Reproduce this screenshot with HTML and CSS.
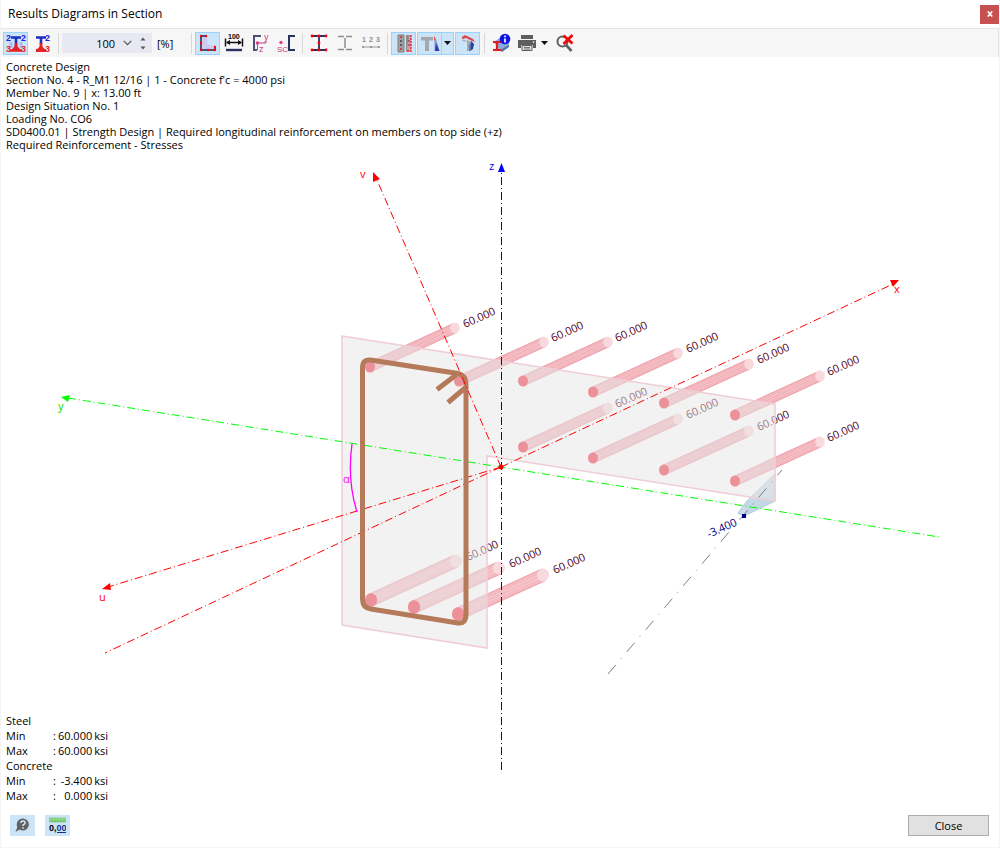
FILE: index.html
```html
<!DOCTYPE html>
<html lang="en">
<head>
<meta charset="utf-8">
<title>Results Diagrams in Section</title>
<link rel="stylesheet" href="styles.css">
</head>
<body>
<div class="window">
  <header class="titlebar">
    <h1 class="title">Results Diagrams in Section</h1>
    <button class="close-x" type="button" aria-label="Close window">
      <svg width="6" height="6" viewBox="0 0 6 6"><path d="M.8.5 5.2 5.5M5.2.5.8 5.5" stroke="#fff" stroke-width="1.7"/></svg>
    </button>
  </header>

  <div class="toolbar" role="toolbar" aria-label="Diagram tools">
    <button class="tool active" type="button" aria-label="Show all values">
      <svg width="20" height="19" viewBox="0 0 20 19">
        <path d="M5 8v6M15 8v6" stroke="#a9bdf4" stroke-width="3"/>
        <path d="M5 3.500h10M10 3.500v9" stroke="#1b2fc0" stroke-width="2.600"/>
        <path d="M4 16.500h12M10 9v5" stroke="#e8202a" stroke-width="2.600"/>
        <path d="M10 10.500 14.500 16h-9z" fill="#e8202a"/>
        <g class="tiny blue"><text x="0" y="7">2</text><text x="15" y="7">2</text></g>
        <g class="tiny red"><text x="0" y="18">3</text><text x="15" y="18">3</text></g>
      </svg>
    </button>
    <button class="tool" type="button" aria-label="Show extreme values">
      <svg width="20" height="19" viewBox="0 0 20 19">
        <path d="M4 3.500h10M9 3v7" stroke="#1b2fc0" stroke-width="2.600"/>
        <path d="M4 16.500h10M9 9v5" stroke="#e8202a" stroke-width="2.800"/>
        <path d="M9 11 13.500 16h-9z" fill="#e8202a"/>
        <text class="tiny blue" x="13" y="7">2</text><text class="tiny red" x="13" y="18">3</text>
      </svg>
    </button>
    <span class="sep"></span>
    <div class="scale">
      <input class="scale-value" type="text" value="100" aria-label="Scale in percent">
      <button class="mini" type="button" aria-label="Open list"><svg width="9" height="6" viewBox="0 0 9 6"><path d="m.7.800 3.800 3.900L8.300.8" fill="none" stroke="#555" stroke-width="1.200"/></svg></button>
      <button class="mini" type="button" aria-label="Step value"><svg width="6" height="13" viewBox="0 0 6 13"><path d="M3 .5 5.500 3.500h-5zM3 12.500.500 9.500h5z" fill="#555"/></svg></button>
    </div>
    <span class="unit">[%]</span>
    <span class="sep"></span>

    <button class="tool active" type="button" aria-label="Section outline">
      <svg width="20" height="20" viewBox="0 0 20 20">
        <path d="M4 2v15h13v-5h-4q-4 0-4-4V2z" fill="#cdcdf2"/>
        <path d="M8 3H3v14h14v-3" fill="none" stroke="#24244e" stroke-width="1.500"/>
        <g fill="#f00"><circle cx="3" cy="3" r="1.200"/><circle cx="8" cy="3" r="1.200"/><circle cx="3" cy="10" r="1.200"/><circle cx="3" cy="17" r="1.200"/><circle cx="10" cy="17" r="1.200"/><circle cx="17" cy="17" r="1.200"/><circle cx="17" cy="14" r="1.200"/></g>
      </svg>
    </button>
    <button class="tool" type="button" aria-label="Dimensions">
      <svg width="20" height="20" viewBox="0 0 20 20">
        <text class="num" x="4" y="6">100</text>
        <path d="M1.500 5.500v8M18.500 5.500v8M3 9.500h14" stroke="#111" stroke-width="1.500"/>
        <path d="m2 9.500 4-2.500v5zM18 9.500 14 7v5z" fill="#111"/>
        <path d="M2 17h16" stroke="#29335e" stroke-width="2.400"/>
      </svg>
    </button>
    <button class="tool" type="button" aria-label="Principal axes">
      <svg width="20" height="20" viewBox="0 0 20 20">
        <path d="M11 3H4v14h3" fill="none" stroke="#4b5179" stroke-width="2"/>
        <path d="M6 10h10v-2M7.500 10v7" stroke="#c63e86" fill="none"/><circle cx="7.500" cy="10" r="1.800" fill="#d13e8c"/>
        <text class="sc" x="14" y="7">y</text><text class="sc" x="9" y="19">z</text>
      </svg>
    </button>
    <button class="tool" type="button" aria-label="Shear center">
      <svg width="20" height="20" viewBox="0 0 20 20">
        <path d="M19 3h-6v14h6" fill="none" stroke="#29335e" stroke-width="2"/>
        <circle cx="5" cy="9.500" r="1.700" fill="#e0408c"/><text class="sc narrow" x="1" y="19">SC</text>
      </svg>
    </button>
    <span class="sep"></span>
    <button class="tool" type="button" aria-label="Stress points">
      <svg width="20" height="20" viewBox="0 0 20 20">
        <path d="M3 3h14M3 17h14M10 3v14" stroke="#29335e" stroke-width="1.800"/>
        <g fill="#f00"><circle cx="3" cy="3" r="1.400"/><circle cx="10" cy="3" r="1.400"/><circle cx="17" cy="3" r="1.400"/><circle cx="10" cy="10" r="1.400"/><circle cx="3" cy="17" r="1.400"/><circle cx="10" cy="17" r="1.400"/><circle cx="17" cy="17" r="1.400"/></g>
      </svg>
    </button>
    <button class="tool" type="button" aria-label="Section parts">
      <svg width="20" height="20" viewBox="0 0 20 20"><path d="M3 3.500h6M11 3.500h6M3 16.500h6M11 16.500h6M10 5v10" stroke="#8e8e8e" stroke-width="1.500"/></svg>
    </button>
    <button class="tool" type="button" aria-label="Numbering">
      <svg width="20" height="20" viewBox="0 0 20 20"><g class="grey"><text x="1" y="9">1</text><text x="8" y="9">2</text><text x="15" y="9">3</text></g><path d="M2 14h16" stroke="#999"/><g fill="#888"><circle cx="2" cy="14" r="1"/><circle cx="10" cy="14" r="1"/><circle cx="18" cy="14" r="1"/></g></svg>
    </button>
    <span class="sep"></span>

    <button class="tool active" type="button" aria-label="Reinforcement">
      <svg width="20" height="20" viewBox="0 0 20 20">
        <path d="M4 2h6v17H4z" fill="#a0a0a0" stroke="#808080"/>
        <path d="M12 2h5v17h-5z" fill="#e0959c"/><path d="M12 2h3q0 4-1 7t-1 9h-1z" fill="#8c8c8c"/>
        <path d="M17 2v16h-5" fill="none" stroke="#dc3540" stroke-width="1.500" stroke-dasharray="2 1"/>
        <circle cx="7" cy="4" r="1" fill="#d22"/><circle cx="7" cy="8" r=".9" fill="#335"/><circle cx="7" cy="12" r=".9" fill="#335"/><circle cx="7" cy="16" r="1" fill="#d22"/><circle cx="15" cy="8" r=".8" fill="#335"/><circle cx="15" cy="12" r=".8" fill="#335"/>
      </svg>
    </button>
    <span class="split">
      <button class="tool active" type="button" aria-label="Stress diagram">
        <svg width="20" height="20" viewBox="0 0 20 20"><path d="M1 4h12v3.500H9V18H5V7.500H1z" fill="#a5a9ae"/><path d="M14 2.500v5h2.500z" fill="#e8525b"/><path d="M14.500 7.500h2L19.500 18h-5z" fill="#8994c8"/><path d="m16 10 3.500 8H15z" fill="#283fae"/></svg>
      </button>
      <button class="drop active" type="button" aria-label="Diagram options"><svg width="7" height="4" viewBox="0 0 7 4"><path d="M0 0h7L3.500 4z" fill="#111"/></svg></button>
    </span>
    <button class="tool active" type="button" aria-label="Concrete stresses">
      <svg width="20" height="20" viewBox="0 0 20 20"><path d="m9 7 5 2-1 9H9z" fill="#a3a8b2"/><path d="m4 4 3-2 8 4 2 3-3-1-6-3-4 1z" fill="#e0454a"/><path d="m5 6 4 2-1 1-4-1z" fill="#b0b5bd"/><path d="m13 8 3 3-1 5-3 2z" fill="#263fa6"/><path d="m11 12 2-2v7l-2 1z" fill="#5f73b8"/></svg>
    </button>
    <span class="sep"></span>
    <button class="tool" type="button" aria-label="Section information">
      <svg width="20" height="20" viewBox="0 0 20 20">
        <path d="m3 9 7-5h8v9l-7 5H9z" fill="#8ba9df"/><path d="m9 17 9-5v2l-7 5z" fill="#55729e"/><path d="M2 9h8M2 17h8M6 9v8" stroke="#e31b24" stroke-width="2.200"/>
        <circle cx="14" cy="6" r="5.300" fill="#0b15e8"/><path d="M14 5.500v4M14 2.500v1.800" stroke="#fff" stroke-width="1.700"/>
      </svg>
    </button>
    <span class="split">
      <button class="tool" type="button" aria-label="Print">
        <svg width="20" height="20" viewBox="0 0 20 20"><path d="M4 2h12v4H4zM1 7h18v8h-3v-3H4v3H1z" fill="#5e5e5e"/><path d="M5 12.500h10v5H5z" fill="#ddd" stroke="#5e5e5e"/><path d="M7 14.500h6M7 16h6" stroke="#777"/><circle cx="16.500" cy="9" r=".8" fill="#fff"/></svg>
      </button>
      <button class="drop" type="button" aria-label="Print options"><svg width="7" height="4" viewBox="0 0 7 4"><path d="M0 0h7L3.500 4z" fill="#111"/></svg></button>
    </span>
    <button class="tool" type="button" aria-label="Reset zoom">
      <svg width="20" height="20" viewBox="0 0 20 20"><circle cx="7.500" cy="8.500" r="5" fill="none" stroke="#606060" stroke-width="2"/><path d="m11 12 5.500 6" stroke="#606060" stroke-width="2.600"/><path d="m8.500 2.500 9 8M17.500 2l-9 9" stroke="#f00808" stroke-width="2.800"/></svg>
    </button>
  </div>

  <main class="stage">
    <svg class="diagram" viewBox="1 57 998 753" role="img" aria-label="Required reinforcement stresses in the section">
      <defs>
        <g id="bar">
          <path d="M0 0 85-39" stroke="#eea3ad" stroke-width="10.500"/>
          <path d="M0 0 85-39" stroke="#f3b7be" stroke-width="8.500"/>
          <path d="M0 0 85-39" stroke="#f6c3c9" stroke-width="3"/>
          <path d="M0 0 85-39" stroke="#f0a9b2" stroke-width="1"/>
          <ellipse cx="85" cy="-39" rx="4.800" ry="5.500" fill="#f8d9dd"/>
        </g>
        <g id="bar-lg">
          <path d="M0 0 85-39" stroke="#eea3ad" stroke-width="13"/>
          <path d="M0 0 85-39" stroke="#f4bac1" stroke-width="11"/>
          <path d="M0 0 85-39" stroke="#f6c3c9" stroke-width="5"/>
          <path d="M0 0 85-39" stroke="#f3b5bd" stroke-width="1"/>
          <ellipse cx="85" cy="-39" rx="6" ry="6.500" fill="#f8d9dd"/>
        </g>
        <ellipse id="cap" rx="5" ry="5.500"/>
        <ellipse id="cap-lg" rx="6.200" ry="6.800"/>
      </defs>

      <g>
        <use href="#bar" x="370" y="367"/><use href="#bar" x="459" y="381"/>
        <use href="#bar" x="523" y="381"/><use href="#bar" x="593" y="392"/>
        <use href="#bar" x="664" y="403"/><use href="#bar" x="735" y="415"/>
        <use href="#bar" x="523" y="447"/><use href="#bar" x="593" y="458"/>
        <use href="#bar" x="664" y="470"/><use href="#bar" x="735" y="481"/>
        <use href="#bar-lg" x="371" y="600"/><use href="#bar-lg" x="414" y="607"/><use href="#bar-lg" x="458" y="614"/>
      </g>
      <g class="value">
        <text transform="translate(465 328) rotate(-24)">60.000</text>
        <text transform="translate(553 342) rotate(-24)">60.000</text>
        <text transform="translate(617 342) rotate(-24)">60.000</text>
        <text transform="translate(688 353) rotate(-24)">60.000</text>
        <text transform="translate(759 364) rotate(-24)">60.000</text>
        <text transform="translate(829 376) rotate(-24)">60.000</text>
        <text transform="translate(617 408) rotate(-24)">60.000</text>
        <text transform="translate(688 419) rotate(-24)">60.000</text>
        <text transform="translate(759 431) rotate(-24)">60.000</text>
        <text transform="translate(829 442) rotate(-24)">60.000</text>
        <text transform="translate(468 561) rotate(-24)">60.000</text>
        <text transform="translate(511 568) rotate(-24)">60.000</text>
        <text transform="translate(555 574) rotate(-24)">60.000</text>
      </g>
      <path d="m738 513 9-12 28-27v27l-31 15z" fill="#cbddea" stroke="#a9c6d9"/>
      <path d="m747 501 28-5v5l-31 15z" fill="#bdd6e5" opacity=".7"/>

      <path d="M342 336 775 404v97L487 456v192L342 625z" fill="#e5e5e5" fill-opacity=".5" stroke="#efcdd5" stroke-width="1.500"/>

      <path class="neutral" d="M608 674 782 470"/>
      <path class="axis y" d="M68 398 939 537"/>
      <path class="axis x" d="M501 467 893 284M501 467 105 653M501 467 108 587"/>
      <path class="axis z" d="M501.500 770V172"/>

      <g fill="#ec909a">
        <use href="#cap" x="370" y="367"/><use href="#cap" x="459" y="381"/><use href="#cap" x="523" y="381"/>
        <use href="#cap" x="593" y="392"/><use href="#cap" x="664" y="403"/><use href="#cap" x="735" y="415"/>
        <use href="#cap" x="523" y="447"/><use href="#cap" x="593" y="458"/><use href="#cap" x="664" y="470"/>
        <use href="#cap" x="735" y="481"/>
        <use href="#cap-lg" x="371" y="600"/><use href="#cap-lg" x="414" y="607"/><use href="#cap-lg" x="458" y="614"/>
      </g>
      <path class="stirrup" d="M362.500 368q0-9 8-8L458 373.500q8 2 8 11V614q0 10-8 9L371 609q-8.500-1-8.500-10zM456 375 437 389.500M465 388 448 402.500"/>
      <path class="axis x" d="M501 467 377 180"/>

      <path d="M352 444Q347 480 357 512" fill="none" stroke="#f0f" stroke-width="1.300"/>
      <circle cx="501" cy="467" r="2.500" fill="#f00"/>
      <path d="M742 514h4v4h-4z" fill="#000080"/>
      <path d="m373 172 7 7-7 3zM102 589l8-6 1 7zM899 280l-9 0 3 7z" fill="#f00"/>
      <path d="m61 397 9-2-2 7z" fill="#0f0"/>
      <path d="m501.500 163 3.500 9h-7z" fill="#00f"/>

      <g class="letter">
        <text x="360" y="178" fill="#f00">v</text><text x="489" y="170" fill="#00f">z</text>
        <text x="894" y="293" fill="#f00">x</text><text x="58" y="410" fill="#0d0">y</text>
        <text x="99" y="601" fill="#f00">u</text><text x="343" y="483" fill="#f0f">α</text>
        <text transform="translate(709 538) rotate(-24)" fill="#000080">-3.400</text>
      </g>
    </svg>

    <div class="info">
      <p>Concrete Design</p>
      <p>Section No. 4 - R_M1 12/16 | 1 - Concrete f'c = 4000 psi</p>
      <p>Member No. 9 | x: 13.00 ft</p>
      <p>Design Situation No. 1</p>
      <p>Loading No. CO6</p>
      <p>SD0400.01 | Strength Design | Required longitudinal reinforcement on members on top side (+z)</p>
      <p>Required Reinforcement - Stresses</p>
    </div>

    <table class="summary">
      <tbody>
        <tr><th colspan="4" scope="rowgroup">Steel</th></tr>
        <tr><th scope="row">Min</th><td>:</td><td class="amount">60.000</td><td>ksi</td></tr>
        <tr><th scope="row">Max</th><td>:</td><td class="amount">60.000</td><td>ksi</td></tr>
      </tbody>
      <tbody>
        <tr><th colspan="4" scope="rowgroup">Concrete</th></tr>
        <tr><th scope="row">Min</th><td>:</td><td class="amount">-3.400</td><td>ksi</td></tr>
        <tr><th scope="row">Max</th><td>:</td><td class="amount">0.000</td><td>ksi</td></tr>
      </tbody>
    </table>
  </main>

  <footer class="footer">
    <button class="foot-btn" type="button" aria-label="Help">
      <svg width="17" height="17" viewBox="0 0 17 17"><path d="M9 1.500a6 6 0 1 1-3.500 11L1.500 15l1.800-5A6 6 0 0 1 9 1.500z" fill="#626262"/><path d="M6.800 6q.2-2 2.200-2t2.200 1.800q0 1.200-2.200 2.400V9M9 10.200v1.600" fill="none" stroke="#d6e8f7" stroke-width="1.500"/></svg>
    </button>
    <button class="foot-btn" type="button" aria-label="Units and decimal places">
      <svg width="17" height="17" viewBox="0 0 17 17"><path d="M.5 1h16v4H.5z" fill="#8bdc83" stroke="#6fc068" stroke-width=".6"/><path d="M3 3v2M6 3v2M9 3v2M12 3v2M15 3v2" stroke="#4b9b47" stroke-width=".7"/><text class="dec" x="0" y="14">0,<tspan fill="#15338a">00</tspan></text><path d="M8 15.500h9" stroke="#15338a"/></svg>
    </button>
    <button class="close-btn" type="button">Close</button>
  </footer>
</div>
</body>
</html>
```

FILE: styles.css
```css
* { box-sizing: border-box; }

body {
  margin: 0;
  background: #fff;
  color: #000;
  font: 11px/13px "Open Sans", "Noto Sans", sans-serif;
}

button { padding: 0; border: 0; background: none; color: inherit; font: inherit; }
p { margin: 0; }
svg { display: block; }

.window {
  display: flex;
  flex-direction: column;
  min-height: 100vh;
  border: 1px solid #f5f5f5;
  border-top: 0;
}

.titlebar {
  display: flex;
  align-items: center;
  justify-content: space-between;
  height: 28px;
  padding-left: 7px;
}

.title { margin: 0; font-size: 12px; line-height: 16px; font-weight: 400; }

.close-x {
  display: grid;
  place-items: center;
  width: 19px;
  height: 19px;
  background: #c75050;
}

.toolbar {
  display: flex;
  align-items: center;
  gap: 1px;
  height: 29px;
  padding: 0 2px;
  border-top: 1px solid #e5e5e5;
  border-right: 1px solid #e5e5e5;
  background: #f6f6f6;
}

.tool {
  display: grid;
  place-items: center;
  flex: none;
  width: 25px;
  height: 23px;
  border: 1px solid transparent;
}

.drop { display: grid; place-items: center; width: 12px; height: 23px; border: 1px solid transparent; border-left: 0; }
.active { border-color: #99d1ff; background: #cce4f7; }
.split { display: flex; }

.sep { width: 1px; height: 21px; margin: 0 2px 0 3px; background: #d8d8d8; }

.scale {
  display: flex;
  align-items: center;
  gap: 8px;
  width: 90px;
  height: 20px;
  padding-right: 6px;
  background: #e8e8f2;
}

.scale-value {
  flex: 1;
  min-width: 0;
  padding: 0;
  border: 0;
  background: none;
  font: inherit;
  text-align: right;
}

.mini { display: grid; place-items: center; }
.unit { margin: 0 14px 0 4px; }

.tiny { font: bold 9px "Liberation Sans", sans-serif; }
.blue { fill: #2323e8; }
.red { fill: #e8202a; }
.num { font: bold 7px "Liberation Sans", sans-serif; }
.sc { font: 9px "Liberation Sans", sans-serif; fill: #c63e86; }
.narrow { font-size: 8px; }
.grey { font: bold 7px "Liberation Sans", sans-serif; fill: #8e8e8e; }

.stage {
  display: grid;
  grid-template: minmax(0, 1fr) / minmax(0, 1fr);
  flex: 1;
  min-height: 0;
}

.stage > * { grid-area: 1 / 1; }
.diagram { width: 100%; height: 100%; }
.info { padding: 3px 5px; }

.value { font-size: 11px; fill: #50001c; }
.letter { font-size: 11px; }

.axis { fill: none; stroke-width: 1; stroke-dasharray: 8 3 1 3; }
.x { stroke: #f00; }
.y { stroke: #0f0; }
.z { stroke: #0000c8; }
.neutral { stroke: #808080; stroke-dasharray: 12 8 1 8; }
.stirrup { fill: none; stroke: #b57a5a; stroke-width: 5; }

.summary {
  align-self: end;
  justify-self: start;
  margin: 0 5px 7px;
  border-collapse: collapse;
  line-height: 15px;
}

.summary th { min-width: 47px; padding: 0; font-weight: 400; text-align: left; }
.summary td { padding: 0 2px 0 0; }
.summary .amount { min-width: 36px; text-align: right; }

.footer {
  display: flex;
  align-items: center;
  gap: 10px;
  height: 37px;
  padding: 0 10px 6px 9px;
}

.foot-btn { display: grid; place-items: center; width: 25px; height: 21px; background: #cce4f7; }
.dec { font: bold 9px "Liberation Sans", sans-serif; }

.close-btn {
  width: 81px;
  height: 21px;
  margin-left: auto;
  border: 1px solid #adadad;
  background: #e1e1e1;
}
```
